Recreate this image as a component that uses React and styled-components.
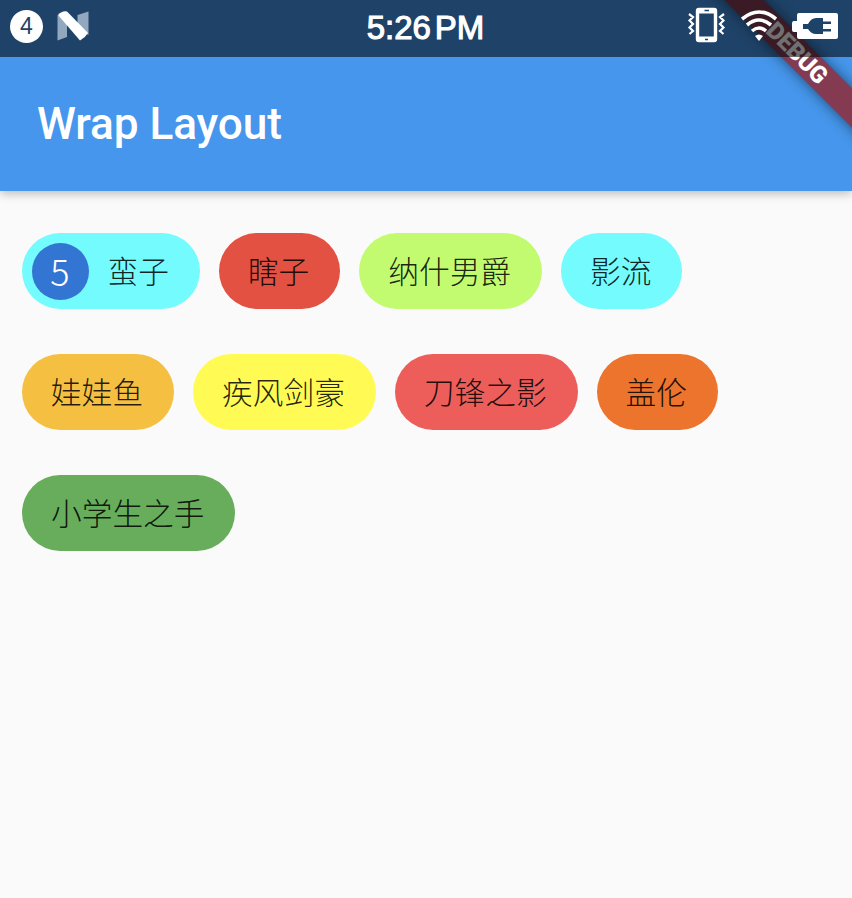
import React from "react";
import styled, { createGlobalStyle } from "styled-components";

const GlobalStyle = createGlobalStyle`
  * { box-sizing: border-box; }
  body { margin: 0; background: #fafafa; }
`;

const Screen = styled.div`
  position: relative;
  height: 898px;
  overflow: hidden;
  background: #fafafa;
  font-family: Roboto, "Noto Sans CJK SC", sans-serif;
`;

const AppBar = styled.header`
  display: flex;
  align-items: center;
  height: 190.5px;
  padding: 57px 38px 0 37px;
  background: #4596ec;
  box-shadow: 0 3px 9px rgba(0, 0, 0, 0.24);
`;

const Title = styled.h1`
  margin: 0;
  color: #fff;
  font-size: 44.2px;
  font-weight: 500;
  line-height: 56px;
  letter-spacing: -0.1px;
  white-space: nowrap;
`;

const StatusBar = styled.div`
  position: absolute;
  inset: 0 0 auto 0;
  display: grid;
  grid-template-columns: 1fr auto 1fr;
  align-items: start;
  height: 57px;
  padding: 7px 14px 0 10px;
  background: rgba(0, 0, 0, 0.56);
`;

const StatusGroup = styled.div`
  display: flex;
  align-items: flex-start;
  justify-content: ${(p) => (p.$end ? "flex-end" : "flex-start")};
  gap: 14px;
`;

const CountBadge = styled.span`
  display: flex;
  align-items: center;
  justify-content: center;
  width: 33px;
  height: 33px;
  margin-top: 3px;
  border-radius: 50%;
  background: #fff;
  color: #1e4369;
  font: 400 23px/33px "Liberation Sans", sans-serif;
`;

const Clock = styled.time`
  display: flex;
  gap: 4px;
  margin-left: 3px;
  color: #fff;
  -webkit-text-stroke: 1.1px #fff;
  font: 400 33px/42px "Liberation Sans", sans-serif;
  white-space: nowrap;
`;

const Ribbon = styled.div`
  position: absolute;
  top: 38.5px;
  left: 646.5px;
  width: 300px;
  height: 28px;
  transform: rotate(45deg);
  background: rgba(148, 36, 44, 0.8);
  box-shadow: 0 0 14px rgba(0, 0, 0, 0.5);
  color: #fff;
  font: 900 24px/29px Roboto, sans-serif;
  letter-spacing: -0.3px;
  text-align: center;
`;

const ChipWrap = styled.main`
  display: flex;
  flex-wrap: wrap;
  gap: 45px 19px;
  padding: 42.8px 22px;
`;

const Chip = styled.div`
  display: flex;
  align-items: center;
  height: 76px;
  padding: 0 30px 0 ${(p) => (p.$avatar ? "9.5px" : "29px")};
  border-radius: 38px;
  background: ${(p) => p.$color};
`;

const ChipLabel = styled.span`
  padding: 0 1px 3px 0;
  color: rgba(0, 0, 0, 0.87);
  font: 300 30.7px/44px "Noto Sans CJK SC", sans-serif;
  white-space: nowrap;
`;

const Avatar = styled.span`
  display: flex;
  align-items: center;
  justify-content: center;
  width: 57px;
  height: 57px;
  margin-right: 19px;
  border-radius: 50%;
  background: #3275d2;
  color: #fff;
  font: 300 36px/54px "Noto Sans CJK SC", sans-serif;
  padding-bottom: 2px;
`;

const heroes = [
  { name: "蛮子", color: "#73fbfd", avatar: "5" },
  { name: "瞎子", color: "#e25141" },
  { name: "纳什男爵", color: "#c2fb70" },
  { name: "影流", color: "#73fbfd" },
  { name: "娃娃鱼", color: "#f5c042" },
  { name: "疾风剑豪", color: "#fffb54" },
  { name: "刀锋之影", color: "#ed5e5a" },
  { name: "盖伦", color: "#ec742d" },
  { name: "小学生之手", color: "#67ad5b" },
];

const NougatIcon = () => (
  <svg width="33" height="35" viewBox="0 0 33 35">
    <path d="M0.5 8 10 12V30L0.5 33.500Z" fill="#91a8be" />
    <path d="M20.500 8 31.500 4.500V28L20.500 23Z" fill="#91a8be" />
    <path d="M1 8Q5 3.500 10 4.500L31 26Q28 31 23 33.500Z" fill="#fff" />
  </svg>
);

const VibrateIcon = () => (
  <svg width="38" height="36" viewBox="0 0 38 36" fill="none" stroke="#fff">
    <rect x="10.5" y="2.500" width="18" height="31" rx="1.5" strokeWidth="3.4" />
    <path d="M10 4H29M10 32H29" strokeWidth="5" />
    <path d="M17.500 3.500H22M18 32.500H21" stroke="#1e4369" strokeWidth="1.5" />
    <path d="M2 7 6 10 2.500 13.500 6 17 2.500 20.500 6 24 2.500 27M37 7 33 10 36.500 13.500 33 17 36.500 20.500 33 24 36.500 27" strokeWidth="2.2" />
  </svg>
);

const WifiIcon = () => (
  <svg width="36" height="31" viewBox="0 0 36 31" fill="none" stroke="#fff" strokeWidth="3.6">
    <path d="M1 9Q18-5 35 9M6 15Q18 5 30 15M11 21Q18 15 25 21" />
    <path d="M14 26Q18 23 22 26L18 31Z" fill="#fff" stroke="none" />
  </svg>
);

const BatteryIcon = () => (
  <svg width="47" height="28" viewBox="0 0 47 28">
    <path d="M7 1H44Q46 1 46 3V25Q46 27 44 27H7Q5 27 5 25V20H2Q0 20 0 18V11Q0 9 2 9H5V3Q5 1 7 1Z" fill="#fff" />
    <path d="M16 12Q19 6 24 6H31V9.500H39V12H31V17H39V19.500H31V22H24Q19 22 16 17H11V12Z" fill="#1e4369" />
  </svg>
);

const IconSlot = styled.span`
  display: flex;
  margin: ${(p) => p.$margin};
`;

export default function App() {
  return (
    <Screen>
      <GlobalStyle />
      <AppBar>
        <Title>Wrap Layout</Title>
      </AppBar>
      <ChipWrap>
        {heroes.map((hero) => (
          <Chip key={hero.name} $color={hero.color} $avatar={Boolean(hero.avatar)}>
            {hero.avatar && <Avatar>{hero.avatar}</Avatar>}
            <ChipLabel>{hero.name}</ChipLabel>
          </Chip>
        ))}
      </ChipWrap>
      <Ribbon>DEBUG</Ribbon>
      <StatusBar>
        <StatusGroup>
          <CountBadge>4</CountBadge>
          <IconSlot $margin="0"><NougatIcon /></IconSlot>
        </StatusGroup>
        <Clock><span>5:26</span><span>PM</span></Clock>
        <StatusGroup $end>
          <IconSlot $margin="0 2px 0 0"><VibrateIcon /></IconSlot>
          <IconSlot $margin="3px 1px 0 0"><WifiIcon /></IconSlot>
          <IconSlot $margin="5px -1px 0 0"><BatteryIcon /></IconSlot>
        </StatusGroup>
      </StatusBar>
    </Screen>
  );
}
